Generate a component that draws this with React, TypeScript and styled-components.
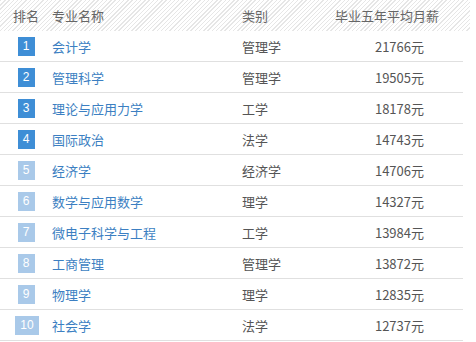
import React from "react";
import styled, { createGlobalStyle } from "styled-components";

const Global = createGlobalStyle`
  html, body { margin: 0; padding: 0; background: #fff; }
  body { font-family: "Noto Sans CJK SC", "Noto Sans", sans-serif; }
`;

const Table = styled.div`
  width: 463px;
  display: flex;
  flex-direction: column;
`;

const Header = styled.div`
  display: grid;
  grid-template-columns: 52px 190px 93px 1fr;
  height: 31px;
  width: 470px;
  align-items: center;
  background: repeating-linear-gradient(
    -45deg,
    #ffffff 0px,
    #ffffff 2px,
    #e6e6e6 2px,
    #e6e6e6 3px
  );
  color: #666;
  font-size: 13px;
`;

const HeadCell = styled.div<{ $pl?: number }>`
  padding-left: ${(p) => p.$pl ?? 0}px;
  white-space: nowrap;
`;

const Row = styled.div`
  display: grid;
  grid-template-columns: 52px 190px 93px 1fr;
  height: 30px;
  align-items: center;
  border-bottom: 1px solid #e0e0e0;
  font-size: 13px;
`;

const RankCell = styled.div`
  display: flex;
  justify-content: center;
  padding-right: 0px;
`;

const Badge = styled.span<{ $top: boolean; $wide: boolean }>`
  display: inline-flex;
  align-items: center;
  justify-content: center;
  width: ${(p) => (p.$wide ? 24 : 17)}px;
  height: 19px;
  margin-left: ${(p) => (p.$wide ? 2 : 0)}px;
  background: ${(p) => (p.$top ? "#3e8ed6" : "#a9c9e9")};
  color: #fff;
  font-family: "Liberation Sans", Arial, sans-serif;
  font-size: 12px;
`;

const Name = styled.div`
  color: #3c7fc2;
  white-space: nowrap;
`;

const Category = styled.div`
  color: #555;
  white-space: nowrap;
`;

const Salary = styled.div`
  color: #555;
  text-align: right;
  padding-right: 39px;
  white-space: nowrap;
`;

const data = [
  ["会计学", "管理学", "21766元"],
  ["管理科学", "管理学", "19505元"],
  ["理论与应用力学", "工学", "18178元"],
  ["国际政治", "法学", "14743元"],
  ["经济学", "经济学", "14706元"],
  ["数学与应用数学", "理学", "14327元"],
  ["微电子科学与工程", "工学", "13984元"],
  ["工商管理", "管理学", "13872元"],
  ["物理学", "理学", "12835元"],
  ["社会学", "法学", "12737元"],
];

export default function App() {
  return (
    <>
      <Global />
      <Table>
        <Header>
          <HeadCell $pl={13}>排名</HeadCell>
          <HeadCell>专业名称</HeadCell>
          <HeadCell>类别</HeadCell>
          <HeadCell $pl={0}>毕业五年平均月薪</HeadCell>
        </Header>
        {data.map(([name, cat, sal], i) => (
          <Row key={i}>
            <RankCell>
              <Badge $top={i < 4} $wide={i === 9}>
                {i + 1}
              </Badge>
            </RankCell>
            <Name>{name}</Name>
            <Category>{cat}</Category>
            <Salary>{sal}</Salary>
          </Row>
        ))}
      </Table>
    </>
  );
}
